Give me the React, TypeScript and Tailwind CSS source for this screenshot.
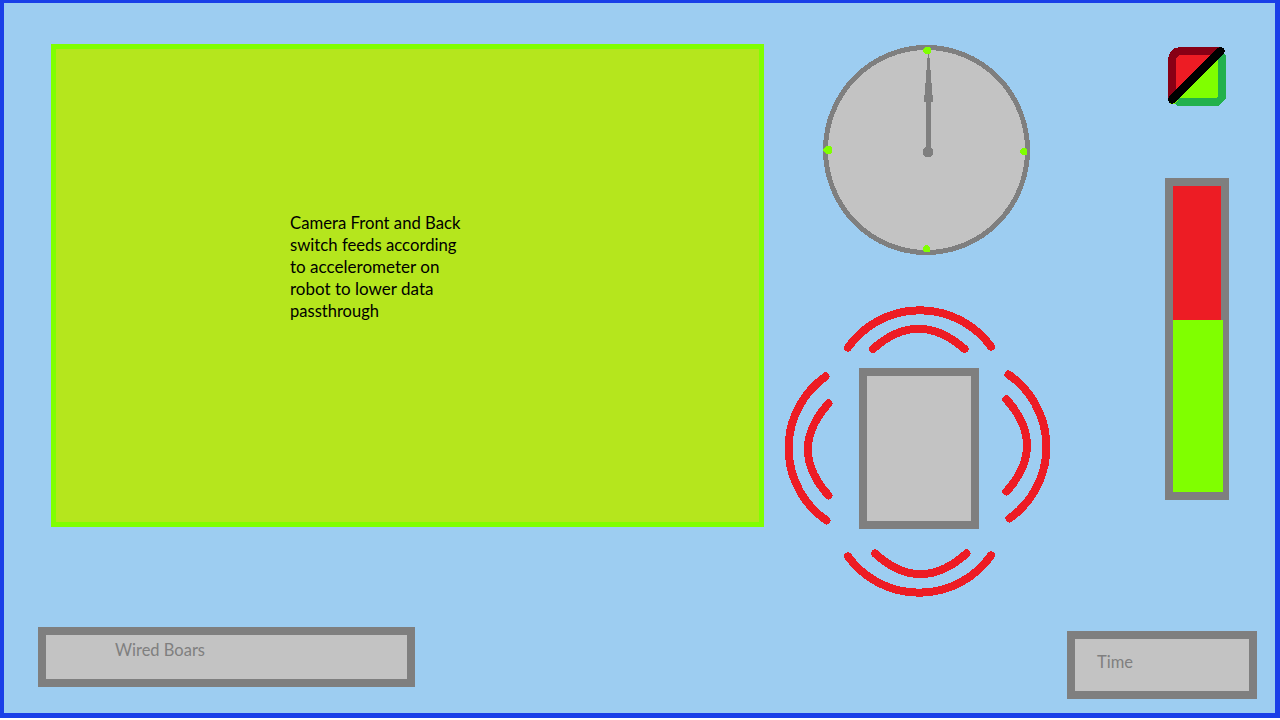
const cameraLines = [
  { text: 'Camera Front and Back', width: 170.5 },
  { text: 'switch feeds according', width: 166.5 },
  { text: 'to accelerometer on', width: 149.5 },
  { text: 'robot to lower data', width: 143.5 },
  { text: 'passthrough', width: 89 },
];

function FittedText({ text, width, fill }: { text: string; width: number; fill: string }) {
  return (
    <svg width={width + 4} height="22" className="block overflow-visible font-[Lato,sans-serif]">
      <text x="0" y="16.5" fontSize="16.5" fill={fill} textLength={width} lengthAdjust="spacingAndGlyphs">
        {text}
      </text>
    </svg>
  );
}

function CameraFeed() {
  return (
    <section className="mt-[41px] ml-[47px] h-[483px] w-[713px] shrink-0 border-[5px] border-[#80ff00] bg-[#b5e61d] pt-[163px] pl-[234px]">
      {cameraLines.map((line) => (
        <FittedText key={line.text} text={line.text} width={line.width} fill="#000" />
      ))}
    </section>
  );
}

function Compass() {
  return (
    <svg className="ml-[38px] block" width="207" height="210" viewBox="823 45 207 210" shapeRendering="crispEdges">
      <ellipse cx="926.5" cy="150" rx="101" ry="102.5" fill="#c3c3c3" stroke="#7f7f7f" strokeWidth="5" />
      <path
        d="M928 53h1v5h1v12h1v13h1v12h1v7h-2v50h-5v-50h-2v-7h1v-12h1v-13h1v-12h1z"
        fill="#7f7f7f"
      />
      <path d="M925 147h6l2 3v4l-2 3h-6l-2-3v-4z" fill="#7f7f7f" />
      <g fill="#80ff00">
        <path d="M925 47h4l2 2v3l-2 2h-4l-2-2v-3z" />
        <path d="M826 146h4l2 2v4l-2 2h-4l-3-3v-1l1-2z" />
        <path d="M1022 148h3l2 2v5h-5l-2-2v-3z" />
        <path d="M925 245h3l2 3v4h-5l-2-1v-3z" />
      </g>
    </svg>
  );
}

function ProximitySensors() {
  return (
    <svg className="mt-[51px] block" width="265" height="291" viewBox="785 306 265 291" shapeRendering="crispEdges">
      <rect x="863" y="372" width="112" height="153" fill="#c3c3c3" stroke="#7f7f7f" strokeWidth="8" />
      <g fill="none" stroke="#ed1c24" strokeWidth="8" strokeLinecap="round">
        <path d="M848 347.5A88 88 0 0 1 991 346.5" />
        <path d="M873 349C903 322 934 322 964.5 349" />
        <path d="M825.5 376.5A88 88 0 0 0 826.5 520.5" />
        <path d="M828.5 403.5C801 434 801 465 828.5 495.5" />
        <path d="M1008.5 374.5A88 88 0 0 1 1009.5 518.5" />
        <path d="M1006.5 399.5C1034 430 1034 461 1006.5 491.5" />
        <path d="M848 556.5A88 88 0 0 0 991 555.5" />
        <path d="M875 553.5C905 581 936 581 966.5 553.5" />
      </g>
    </svg>
  );
}

function StatusToggle() {
  return (
    <svg
      className="ml-[3px] block overflow-visible"
      width="58"
      height="59"
      viewBox="1168 47 58 59"
      shapeRendering="crispEdges"
    >
      <path d="M1168 100V58L1171 51L1175 48L1180 47H1220z" fill="#880015" />
      <path d="M1176 95V58L1179 55H1216z" fill="#ed1c24" />
      <path d="M1223 53L1226 55V98L1219 106H1178L1172 102z" fill="#22b14c" />
      <path d="M1218 54V96L1216 98H1174z" fill="#80ff00" />
      <path d="M1168 100H1178L1174 104H1170z" fill="#80ff00" />
      <path d="M1172 99.5L1220.5 51" stroke="#000" strokeWidth="8" strokeLinecap="round" />
    </svg>
  );
}

function LevelBar() {
  return (
    <div className="mt-[72px] h-[322px] w-16 border-8 border-[#7f7f7f] bg-[#7f7f7f]">
      <div className="h-[134px] w-12 bg-[#ed1c24]" />
      <div className="h-[172px] w-[50px] bg-[#80ff00]" />
    </div>
  );
}

export default function App() {
  return (
    <div className="h-[720px] w-[1280px] bg-white">
      <main className="flex h-[718px] w-[1280px] flex-col overflow-hidden border-t-[3px] border-r-[5px] border-b-[5px] border-l-4 border-[#1a3fe8] bg-[#9dcdf1]">
        <div className="flex h-[624px] shrink-0 items-start">
          <CameraFeed />
          <div className="mt-[42px] ml-[21px] w-[265px] shrink-0">
            <Compass />
            <ProximitySensors />
          </div>
          <div className="mt-[44px] ml-[115px] w-16 shrink-0">
            <StatusToggle />
            <LevelBar />
          </div>
        </div>
        <footer className="flex items-start justify-between pr-[18px] pl-[34px]">
          <div className="h-[60px] w-[377px] border-8 border-[#7f7f7f] bg-[#c3c3c3] pt-1 pl-[69px]">
            <FittedText text="Wired Boars" width={90} fill="#7f7f7f" />
          </div>
          <div className="mt-1 h-[68px] w-[190px] border-8 border-[#7f7f7f] bg-[#c3c3c3] pt-3 pl-[22px]">
            <FittedText text="Time" width={36} fill="#7f7f7f" />
          </div>
        </footer>
      </main>
    </div>
  );
}
